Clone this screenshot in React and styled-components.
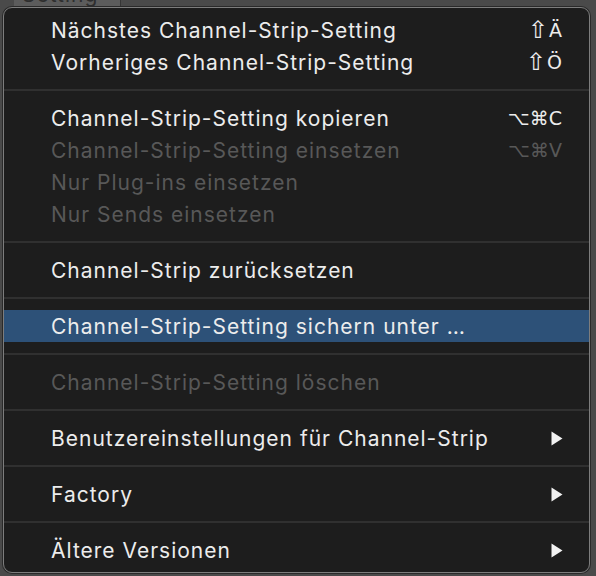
import React from "react";
import styled, { createGlobalStyle } from "styled-components";

const Global = createGlobalStyle`
  html, body { margin: 0; padding: 0; }
  body {
    width: 596px;
    height: 576px;
    overflow: hidden;
    background: #4b4b4b;
    font-family: Inter, "DejaVu Sans", sans-serif;
  }
`;

const Stage = styled.div`
  position: relative;
  width: 596px;
  height: 576px;
  background: #4a4a4a;
  overflow: hidden;
`;

const Backdrop = styled.div`
  display: flex;
  height: 8px;
  padding-left: 14px;
`;

const BackButton = styled.div`
  width: 98px;
  height: 8px;
  background: #5c5c5c;
  border-right: 1px solid #363636;
  overflow: hidden;
  color: #2e2e2e;
  font-size: 21px;
  line-height: 8px;
  padding-left: 8px;
  letter-spacing: 1px;
  & span { display: block; transform: translateY(-9px); }
`;

const Menu = styled.div`
  position: absolute;
  left: 3px;
  top: 7px;
  width: 585px;
  height: 564px;
  box-sizing: content-box;
  background: #1d1d1d;
  border: 1px solid #7d7d7d;
  border-radius: 9px;
  display: flex;
  flex-direction: column;
  box-shadow: 0 0 0 1px #2a2a2a;
  overflow: hidden;
`;

const Inner = styled.div`
  display: flex;
  flex-direction: column;
  padding: 6px 0 6px;
`;

const Row = styled.div`
  display: flex;
  align-items: center;
  height: 32px;
  padding: 0 27px 0 47px;
  font-size: 21px;
  color: ${(p) => (p.$disabled ? "#585858" : "#ececec")};
  background: ${(p) => (p.$active ? "#2d5178" : "transparent")};
  letter-spacing: 1px;
  white-space: nowrap;
`;

const Label = styled.span`
  flex: 1;
`;

const Shortcut = styled.span`
  font-family: "DejaVu Sans", sans-serif;
  font-size: 19px;
  letter-spacing: 0;
  display: flex;
  align-items: center;
`;

const ShiftGlyph = styled.span`
  font-size: 24px;
  margin-right: 1px;
`;

const Separator = styled.div`
  height: 24px;
  display: flex;
  align-items: center;
  &::after {
    content: "";
    display: block;
    width: 100%;
    height: 2px;
    background: #303030;
  }
`;

const Arrow = styled.svg`
  width: 12px;
  height: 15px;
  margin-right: -1px;
`;

const SubArrow = () => (
  <Arrow viewBox="0 0 12 15">
    <path d="M0.5 0.5 L11.5 7.5 L0.5 14.5 Z" fill="#f2f2f2" />
  </Arrow>
);

const groups = [
  [
    { label: "Nächstes Channel-Strip-Setting", shift: true, sc: "Ä" },
    { label: "Vorheriges Channel-Strip-Setting", shift: true, sc: "Ö" },
  ],
  [
    { label: "Channel-Strip-Setting kopieren", sc: "⌥⌘C" },
    { label: "Channel-Strip-Setting einsetzen", sc: "⌥⌘V", disabled: true },
    { label: "Nur Plug-ins einsetzen", disabled: true },
    { label: "Nur Sends einsetzen", disabled: true },
  ],
  [{ label: "Channel-Strip zurücksetzen" }],
  [{ label: "Channel-Strip-Setting sichern unter …", active: true }],
  [{ label: "Channel-Strip-Setting löschen", disabled: true }],
  [{ label: "Benutzereinstellungen für Channel-Strip", sub: true }],
  [{ label: "Factory", sub: true }],
  [{ label: "Ältere Versionen", sub: true }],
];

export default function App() {
  return (
    <Stage>
      <Global />
      <Backdrop>
        <BackButton>
          <span>Setting</span>
        </BackButton>
      </Backdrop>
      <Menu>
        <Inner>
          {groups.map((g, gi) => (
            <React.Fragment key={gi}>
              {gi > 0 && <Separator />}
              {g.map((it) => (
                <Row key={it.label} $disabled={it.disabled} $active={it.active}>
                  <Label>{it.label}</Label>
                  {it.sc && (
                    <Shortcut>
                      {it.shift && <ShiftGlyph>⇧</ShiftGlyph>}
                      {it.sc}
                    </Shortcut>
                  )}
                  {it.sub && <SubArrow />}
                </Row>
              ))}
            </React.Fragment>
          ))}
        </Inner>
      </Menu>
    </Stage>
  );
}
